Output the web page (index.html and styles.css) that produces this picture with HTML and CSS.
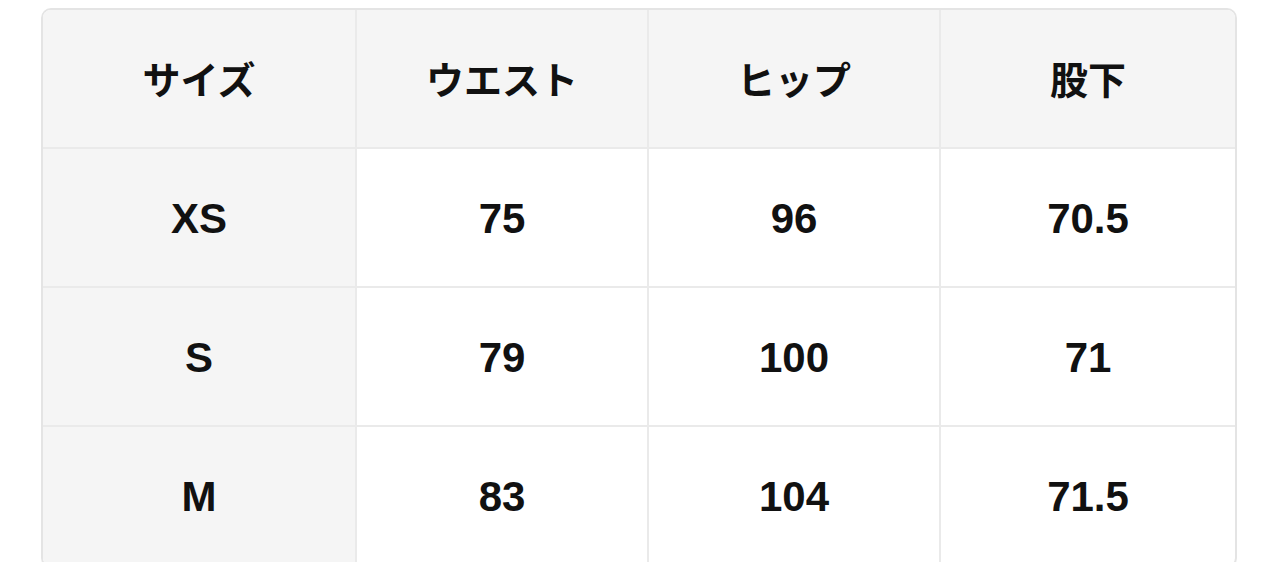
FILE: index.html
```html
<!DOCTYPE html>
<html lang="ja">
<head>
<meta charset="utf-8">
<title>サイズ表</title>
<link rel="stylesheet" href="styles.css">
</head>
<body>
<div class="size-table">
  <div class="row head">
    <div class="cell label">サイズ</div>
    <div class="cell">ウエスト</div>
    <div class="cell">ヒップ</div>
    <div class="cell">股下</div>
  </div>
  <div class="row">
    <div class="cell label">XS</div>
    <div class="cell">75</div>
    <div class="cell">96</div>
    <div class="cell">70.5</div>
  </div>
  <div class="row">
    <div class="cell label">S</div>
    <div class="cell">79</div>
    <div class="cell">100</div>
    <div class="cell">71</div>
  </div>
  <div class="row">
    <div class="cell label">M</div>
    <div class="cell">83</div>
    <div class="cell">104</div>
    <div class="cell">71.5</div>
  </div>
</div>
</body>
</html>
```
FILE: styles.css
```css
html, body {
  margin: 0;
  padding: 0;
  background: #ffffff;
}

body {
  font-family: "Liberation Sans", "Noto Sans CJK JP", sans-serif;
  color: #111111;
}

.size-table {
  margin: 8px 47px 0 41px;
  border: 2px solid #e4e4e4;
  border-radius: 10px;
  overflow: hidden;
  background: #ffffff;
}

.row {
  display: grid;
  grid-template-columns: 314px 292px 292px 1fr;
  height: 139px;
  border-bottom: 2px solid #eaeaea;
  box-sizing: border-box;
}

.row.head {
  height: 139px;
  background: #f5f5f5;
}

.cell {
  display: flex;
  align-items: center;
  justify-content: center;
  border-right: 2px solid #eaeaea;
  font-size: 42px;
  font-weight: 700;
  padding-top: 2px;
}

.cell:last-child {
  border-right: none;
}

.row.head .cell {
  font-family: "Noto Sans CJK JP", sans-serif;
  font-size: 38px;
  padding-top: 0;
  padding-bottom: 3px;
}

.cell.label {
  background: #f5f5f5;
}
```
